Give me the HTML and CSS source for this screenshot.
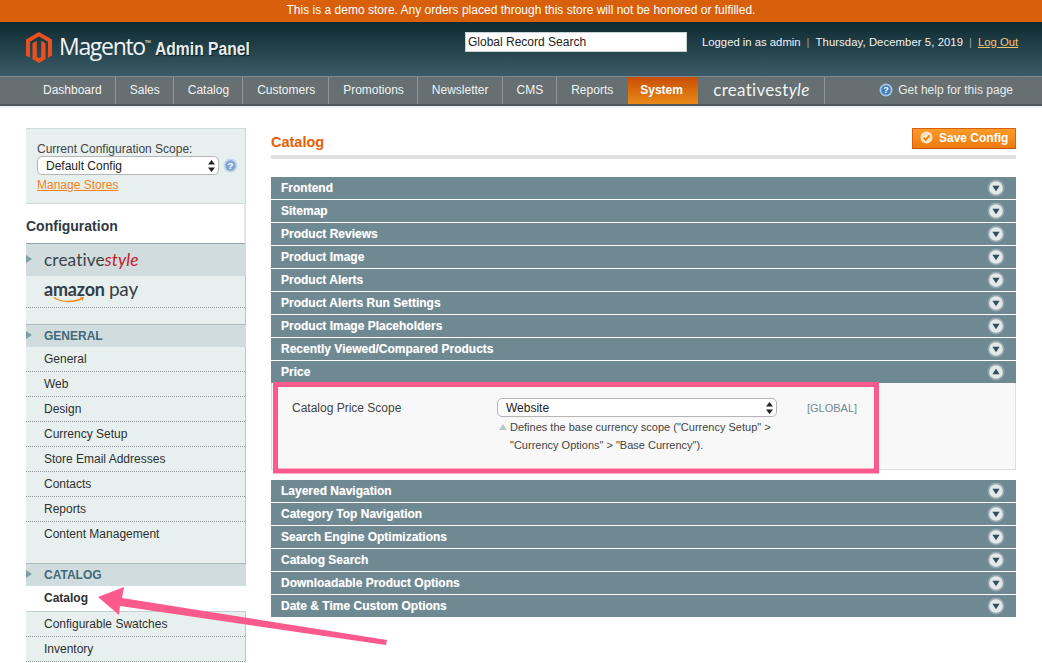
FILE: index.html
```html
<!DOCTYPE html>
<html lang="en">
<head>
<meta charset="utf-8">
<title>Magento Admin Panel</title>
<link rel="stylesheet" href="styles.css">
</head>
<body>
<svg class="defs" width="0" height="0" aria-hidden="true">
  <symbol id="toggle-down" viewBox="0 0 20 20">
    <circle cx="10" cy="10" r="8.500" fill="#fff" fill-opacity=".25"/>
    <circle cx="10" cy="10" r="6.800" fill="#e3e9ea"/>
    <path d="M6.400 7.800h7.200L10 13.200z" fill="#2f4d5b"/>
  </symbol>
  <symbol id="toggle-up" viewBox="0 0 20 20">
    <circle cx="10" cy="10" r="8.500" fill="#fff" fill-opacity=".25"/>
    <circle cx="10" cy="10" r="6.800" fill="#e3e9ea"/>
    <path d="M6.400 12.200h7.200L10 6.800z" fill="#2f4d5b"/>
  </symbol>
  <symbol id="select-arrows" viewBox="0 0 7 12">
    <path d="M3.500 0 7 4.600H0zM3.500 12 0 7.400h7z" fill="#222"/>
  </symbol>
</svg>

<div class="notice">This is a demo store. Any orders placed through this store will not be honored or fulfilled.</div>

<header class="header">
  <div class="brand">
    <svg class="brand-mark" viewBox="0 0 26 31" aria-hidden="true">
      <path d="M13 0 26 7.500V23.500L22 25.800V9.800L13 4.600 4 9.800V25.800L0 23.500V7.500z" fill="#e9501f"/>
      <path d="M6.500 11.200 10.800 8.700V25L13 26.300 15.200 25V8.700L19.500 11.200V27.300L13 31 6.500 27.300z" fill="#e9501f"/>
    </svg>
    <span class="brand-name">Magento<sup class="brand-tm">™</sup></span>
    <span class="brand-sub">Admin Panel</span>
  </div>
  <input class="search" type="text" value="Global Record Search" aria-label="Global Record Search">
  <div class="session">
    <span>Logged in as admin</span><span class="sep">|</span><span class="session-date">Thursday, December 5, 2019</span><span class="sep">|</span><a class="logout" href="#">Log Out</a>
  </div>
</header>

<nav class="nav">
  <a class="nav-item" href="#">Dashboard</a>
  <a class="nav-item" href="#">Sales</a>
  <a class="nav-item" href="#">Catalog</a>
  <a class="nav-item" href="#">Customers</a>
  <a class="nav-item" href="#">Promotions</a>
  <a class="nav-item" href="#">Newsletter</a>
  <a class="nav-item" href="#">CMS</a>
  <a class="nav-item" href="#">Reports</a>
  <a class="nav-item nav-active" href="#">System</a>
  <a class="nav-item nav-cs" href="#">creativest<i>yle</i></a>
  <a class="nav-help" href="#">
    <svg class="help-icon" viewBox="0 0 14 14" aria-hidden="true"><circle cx="7" cy="7" r="6.500" fill="#a9c8e6"/><circle cx="7" cy="7" r="4.800" fill="#3f7fbd"/><text x="7" y="10.200" class="help-q">?</text></svg>
    Get help for this page
  </a>
</nav>

<div class="page">
  <aside class="side">
    <div class="scope">
      <label class="scope-label">Current Configuration Scope:</label>
      <div class="scope-row">
        <div class="select-wrap scope-select">
          <select class="select"><option>Default Config</option></select>
          <svg class="select-arrows"><use href="#select-arrows"/></svg>
        </div>
        <svg class="scope-help" viewBox="0 0 14 14" aria-hidden="true"><circle cx="7" cy="7" r="6.500" fill="#c3d6ea"/><circle cx="7" cy="7" r="4.800" fill="#7fa5cf"/><text x="7" y="10.200" class="help-q">?</text></svg>
      </div>
      <a class="manage" href="#">Manage Stores</a>
    </div>

    <h3 class="side-title">Configuration</h3>

    <div class="group-head logo-head">
      <span class="cs-logo">creative<i>style</i></span>
    </div>
    <ul class="items items-logo">
      <li class="item amazon-item">
        <span class="amazon">amazon <span class="amazon-pay">pay</span></span>
        <svg class="amazon-smile" viewBox="0 0 32 7" aria-hidden="true"><path d="M1 1.500C9 7 22 6.500 30 2" fill="none" stroke="#f08c1e" stroke-width="1.500"/><path d="M27 .8 31 1.200 29.800 5z" fill="#f08c1e"/></svg>
      </li>
    </ul>

    <div class="group-head">GENERAL</div>
    <ul class="items items-pad">
      <li class="item">General</li>
      <li class="item">Web</li>
      <li class="item">Design</li>
      <li class="item">Currency Setup</li>
      <li class="item">Store Email Addresses</li>
      <li class="item">Contacts</li>
      <li class="item">Reports</li>
      <li class="item item-last">Content Management</li>
    </ul>

    <div class="group-head">CATALOG</div>
    <ul class="items">
      <li class="item item-current">Catalog</li>
      <li class="item">Configurable Swatches</li>
      <li class="item">Inventory</li>
    </ul>
  </aside>

  <main class="main">
    <div class="title-bar">
      <h3 class="title">Catalog</h3>
      <button class="save" type="button">
        <svg class="save-icon" viewBox="0 0 14 14" aria-hidden="true"><circle cx="7" cy="7" r="6.500" fill="#fde6c8"/><path d="M3.800 7.200 6.200 9.600 10.300 4.800" fill="none" stroke="#f18200" stroke-width="2"/></svg>
        Save Config
      </button>
    </div>

    <div class="sections">
      <div class="section">Frontend<svg class="toggle"><use href="#toggle-down"/></svg></div>
      <div class="section">Sitemap<svg class="toggle"><use href="#toggle-down"/></svg></div>
      <div class="section">Product Reviews<svg class="toggle"><use href="#toggle-down"/></svg></div>
      <div class="section">Product Image<svg class="toggle"><use href="#toggle-down"/></svg></div>
      <div class="section">Product Alerts<svg class="toggle"><use href="#toggle-down"/></svg></div>
      <div class="section">Product Alerts Run Settings<svg class="toggle"><use href="#toggle-down"/></svg></div>
      <div class="section">Product Image Placeholders<svg class="toggle"><use href="#toggle-down"/></svg></div>
      <div class="section">Recently Viewed/Compared Products<svg class="toggle"><use href="#toggle-down"/></svg></div>
      <div class="section section-open">Price<svg class="toggle"><use href="#toggle-up"/></svg></div>
      <div class="panel">
        <div class="panel-label">Catalog Price Scope</div>
        <div class="panel-value">
          <div class="select-wrap">
            <select class="select"><option>Website</option></select>
            <svg class="select-arrows"><use href="#select-arrows"/></svg>
          </div>
          <p class="note">Defines the base currency scope ("Currency Setup" &gt; "Currency Options" &gt; "Base Currency").</p>
        </div>
        <div class="panel-scope">[GLOBAL]</div>
      </div>
      <div class="section">Layered Navigation<svg class="toggle"><use href="#toggle-down"/></svg></div>
      <div class="section">Category Top Navigation<svg class="toggle"><use href="#toggle-down"/></svg></div>
      <div class="section">Search Engine Optimizations<svg class="toggle"><use href="#toggle-down"/></svg></div>
      <div class="section">Catalog Search<svg class="toggle"><use href="#toggle-down"/></svg></div>
      <div class="section">Downloadable Product Options<svg class="toggle"><use href="#toggle-down"/></svg></div>
      <div class="section">Date &amp; Time Custom Options<svg class="toggle"><use href="#toggle-down"/></svg></div>
    </div>
  </main>
</div>

<svg class="annotations" width="1042" height="663" viewBox="0 0 1042 663" aria-hidden="true">
  <rect x="275.500" y="384.500" width="601" height="86.500" fill="none" stroke="#fb5a8c" stroke-width="5"/>
  <path d="M98 597 124 587 122 598 387 640 386 645 120 606 119 615z" fill="#fb5a8c"/>
</svg>
</body>
</html>
```
FILE: styles.css
```css
* { box-sizing: border-box; }
html, body { margin: 0; padding: 0; height: 100%; }
body {
  position: relative;
  height: 663px;
  overflow: hidden;
  background: #fff;
  color: #2f2f2f;
  font: 12px/1.25 "Liberation Sans", Arial, sans-serif;
}
.defs { position: absolute; }
a { color: inherit; text-decoration: none; }
ul { list-style: none; margin: 0; padding: 0; }
h3, p { margin: 0; }

.notice {
  height: 22px;
  background: #d85f0b;
  color: #fff;
  text-align: center;
  line-height: 20px;
  font-size: 12px;
}

.header {
  display: flex;
  height: 54px;
  padding: 0 20px 0 26px;
  background: linear-gradient(#0f2a30, #3a5b67);
  color: #fff;
}
.brand { display: flex; align-items: flex-start; width: 439px; padding-top: 10px; }
.brand-mark { width: 26px; height: 31px; flex: none; }
.brand-name {
  margin-left: 7px;
  font: 400 23px/29px "Open Sans", sans-serif;
  letter-spacing: -1.300px;
  color: #f2f5f5;
}
.brand-tm { font-size: 8px; vertical-align: 9px; line-height: 0; letter-spacing: 0; }
.brand-sub {
  display: inline-block;
  margin: 2px 0 0 4px;
  font: bold 18px/30px "Liberation Sans", sans-serif;
  color: #e6ecec;
  text-shadow: 1px 1px 1px #0b1c20;
  white-space: nowrap;
  transform: scaleX(.87);
  transform-origin: left center;
}
.search {
  width: 222px;
  height: 20px;
  margin-top: 10px;
  padding: 0 2px;
  border: 1px solid #c9d2d4;
  background: #fff;
  color: #222;
  font: 12px "Liberation Sans", sans-serif;
}
.session {
  display: flex;
  margin: 13px 0 0 15px;
  font-size: 11.300px;
  line-height: 14px;
  color: #f0f3f3;
  white-space: nowrap;
}
.session-date { letter-spacing: .08px; }
.sep { margin: 0 6px; color: #8fa3a9; }
.logout { color: #f6c36f; text-decoration: underline; }

.nav {
  display: flex;
  height: 30px;
  padding: 0 29px 0 29px;
  background: #666f72;
  border-top: 1px solid #7f8a8d;
  border-bottom: 2px solid #4e585b;
  color: #f2f4f4;
}
.nav-item {
  padding: 0 13px 0 14px;
  line-height: 26px;
  border-right: 1px solid #8e989a;
  white-space: nowrap;
}
.nav-item:nth-child(8) { border-right: 0; padding-right: 15px; }
.nav-active {
  width: 70px;
  padding: 0 0 0 12px;
  border-right: 0;
  background: linear-gradient(#c84e05, #e98a18);
  color: #fff;
  font-weight: bold;
}
.nav-cs {
  width: 127px;
  padding: 0 0 0 15px;
  font: 400 17px/26px "Lato", sans-serif;
  letter-spacing: .3px;
  color: #f2f4f4;
}
.nav-cs i { font-style: italic; }
.nav-help {
  display: flex;
  align-items: center;
  gap: 5px;
  margin-left: auto;
  line-height: 26px;
  height: 26px;
  color: #e8ecec;
}
.help-icon { width: 14px; height: 14px; }
.help-q { font: bold 9px "Liberation Sans", sans-serif; fill: #fff; text-anchor: middle; }

.page {
  display: flex;
  align-items: flex-start;
  gap: 25px;
  padding: 20px 26px 0;
  border-top: 2px solid #eef1f1;
}

.side { width: 220px; flex: none; }
.scope {
  height: 76px;
  padding: 13px 10px 0 11px;
  background: #e7efef;
  border: 1px solid #cddddd;
  border-width: 1px 1px 1px 0;
}
.scope-label { display: block; line-height: 15px; color: #444; margin-bottom: -1px; }
.scope-row { display: flex; align-items: center; gap: 4px; }
.scope-select { width: 182px; flex: none; }
.scope-help { width: 15px; height: 15px; flex: none; }
.manage { display: block; margin-top: 2px; line-height: 16px; color: #f58220; text-decoration: underline; }

.select-wrap { position: relative; height: 19px; }
.select {
  display: block;
  width: 100%;
  height: 100%;
  padding: 0 18px 0 8px;
  appearance: none;
  -webkit-appearance: none;
  border: 1px solid #b5b5b5;
  border-radius: 5px;
  background: #fff;
  color: #222;
  font: 12px "Liberation Sans", sans-serif;
}
.select-arrows {
  position: absolute;
  top: 4px;
  right: 4px;
  width: 7px;
  height: 12px;
}

.side-title {
  height: 40px;
  background: #fff;
  border-right: 2px solid #e4e8e8;
  border-bottom: 1px solid #8da5aa;
  font-size: 14px;
  line-height: 44px;
  color: #2f3a40;
}

.group-head {
  position: relative;
  height: 23px;
  padding-left: 18px;
  background: #d0dcdd;
  border-top: 1px solid #a9bdc0;
  color: #41697a;
  font-weight: bold;
  line-height: 22px;
}
.group-head::before {
  content: "";
  position: absolute;
  left: 0;
  top: 6px;
  border: 4px solid transparent;
  border-left: 6px solid #7d9fa9;
  border-right: 0;
}
.logo-head { height: 32px; border-top: 0; }
.logo-head::before { top: 11px; }
.cs-logo {
  font: 400 17.300px/31px "Lato", sans-serif;
  color: #3b4348;
  letter-spacing: .1px;
}
.cs-logo i { color: #c3202f; font-style: italic; }

.items { background: #e7efef; border-right: 1px solid #b9c8ca; }
.item {
  height: 25px;
  padding-left: 18px;
  border-bottom: 1px dotted #8d9698;
  line-height: 25px;
  color: #2f2f2f;
}
.items-pad { height: 216px; }
.item-last { border-bottom: 0; }
.item-current {
  height: 26px;
  background: #fff;
  font-weight: bold;
  border-bottom: 1px solid #c3d1d3;
  margin-right: -1px;
}
.items-logo { padding-bottom: 16px; }
.amazon-item {
  position: relative;
  height: 32px;
  line-height: 25px;
}
.amazon { font: bold 18px/25px "Lato", sans-serif; color: #333e48; letter-spacing: -.2px; }
.amazon-pay { font-weight: 400; font-size: 19px; }
.amazon-smile { position: absolute; left: 27px; top: 20px; width: 32px; height: 7px; }

.main { width: 745px; flex: none; }
.title-bar {
  display: flex;
  justify-content: space-between;
  align-items: flex-start;
  height: 31px;
  border-bottom: 4px solid #dfdfdf;
}
.title { margin-top: 5px; color: #eb5e00; font-size: 14.500px; line-height: 18px; }
.save {
  display: flex;
  align-items: center;
  gap: 6px;
  width: 104px;
  height: 21px;
  padding: 0 0 2px 7px;
  border: 1px solid #d85f0b;
  border-bottom-color: #bf5209;
  background: linear-gradient(#fb9b2b, #f07a0d);
  color: #fff;
  font: bold 12px "Liberation Sans", sans-serif;
}
.save-icon { width: 13px; height: 13px; flex: none; }

.sections { margin-top: 18px; display: flex; flex-direction: column; }
.section {
  display: flex;
  justify-content: space-between;
  align-items: center;
  height: 22px;
  margin-bottom: 1px;
  padding: 0 10px;
  background: #6f8992;
  color: #fff;
  font-weight: bold;
  text-shadow: 0 0 1px rgba(255,255,255,.4);
}
.section-open { margin-bottom: 0; }
.toggle { width: 20px; height: 20px; flex: none; }
.panel {
  display: flex;
  height: 87px;
  margin-bottom: 10px;
  padding: 15px 0 0 20px;
  background: #f8f8f8;
  border: 1px solid #dadfe0;
  border-top: 0;
}
.panel-label { width: 205px; padding-top: 3px; color: #444; }
.panel-value { width: 280px; }
.note {
  position: relative;
  margin-top: 1px;
  padding: 0 5px 0 13px;
  font-size: 11px;
  line-height: 18px;
  color: #444;
}
.note::before {
  content: "";
  position: absolute;
  left: 2px;
  top: 6px;
  border: 4px solid transparent;
  border-bottom: 6px solid #b5c7cc;
  border-top: 0;
}
.panel-scope { margin-left: 30px; padding-top: 4px; font-size: 11px; color: #6f8992; }

.annotations { position: absolute; left: 0; top: 0; pointer-events: none; }
```
